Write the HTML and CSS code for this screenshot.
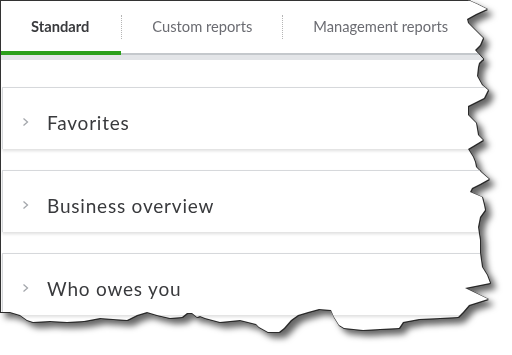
FILE: index.html
```html
<!DOCTYPE html>
<html lang="en">
<head>
<meta charset="UTF-8">
<title>Reports</title>
<link rel="stylesheet" href="styles.css">
</head>
<body>
<div class="sheet">
  <div class="page">

    <!-- tabs -->
    <nav class="tabs">
      <a class="tab active">Standard</a>
      <span class="sep"></span>
      <a class="tab">Custom reports</a>
      <span class="sep"></span>
      <a class="tab">Management reports</a>
    </nav>

    <!-- report groups -->
    <div class="groups">
      <div class="group">
        <svg class="chev" width="7" height="10" viewBox="0 0 7 10"><polyline points="1.5,1.5 5.5,5 1.5,8.5"/></svg>
        <span class="title">Favorites</span>
      </div>
      <div class="group">
        <svg class="chev" width="7" height="10" viewBox="0 0 7 10"><polyline points="1.5,1.5 5.5,5 1.5,8.5"/></svg>
        <span class="title">Business overview</span>
      </div>
      <div class="group">
        <svg class="chev" width="7" height="10" viewBox="0 0 7 10"><polyline points="1.5,1.5 5.5,5 1.5,8.5"/></svg>
        <span class="title">Who owes you</span>
      </div>
    </div>

  </div>
</div>
</body>
</html>
```

FILE: styles.css
```css
body{margin:0;background:#fff;font-family:Lato, "Open Sans", sans-serif;}

/* torn paper look: outline + soft shadow on the clipped page */
.sheet{
  width:512px;height:355px;
  filter:drop-shadow(1px 0 0 #2a2a2a) drop-shadow(0 1px 0 #2a2a2a) drop-shadow(5px 5px 3px rgba(0,0,0,.6));
}
.page{
  height:355px;box-sizing:border-box;background:#fff;
  border-top:1px solid #333;border-left:1px solid #333;
  clip-path:polygon(0 0,468px 0,477px 4px,487px 9px,476px 14px,467px 19px,468px 23px,475px 30px,483px 38px,480px 45px,475px 50px,483px 59px,479px 63px,478px 67px,477px 76px,482px 85px,488px 90px,484px 98px,476px 102px,468px 106px,468px 115px,476px 123px,477px 129px,478px 135px,483px 140px,468px 149px,473px 157px,475px 162px,476px 167px,482px 173px,489px 179px,480px 184px,472px 188px,470px 192px,482px 197px,484px 205px,485px 210px,480px 217px,478px 227px,479px 234px,480px 240px,480px 253px,481px 260px,482px 267px,487px 275px,490px 283px,465px 288px,488px 299px,469px 305px,463px 312px,458px 317px,440px 318px,419px 319px,403px 322px,399px 328px,380px 329px,363px 330px,344px 328px,339px 325px,334px 317px,331px 310px,319px 309px,308px 312px,298px 315px,291px 320px,284px 328px,279px 332px,268px 332px,259px 327px,256px 324px,240px 320px,220px 322px,205px 318px,200px 316px,197px 317px,192px 313px,187px 313px,182px 317px,170px 318px,157px 315px,147px 312px,137px 315px,127px 320px,113px 319px,100px 318px,84px 321px,67px 322px,50px 321px,33px 322px,27px 320px,20px 315px,10px 312px,0 312px);
}

.tabs{
  display:flex;align-items:center;height:52px;
  border-bottom:2px solid #c4c8cc;box-shadow:0 5px 0 #e3e5e8;
}
.tab{
  align-self:stretch;display:flex;align-items:center;
  padding:0 30px 3px;font-size:14.7px;color:#6b6c72;
}
.tab.active{
  color:#393a3d;font-weight:bold;padding-right:32px;
  padding-bottom:1px;border-bottom:4px solid #2ca01c;margin-bottom:-2px;
}
.sep{width:0;height:24px;border-left:1px dotted #b5b5b5;}

.groups{padding:32px 0 0 1px;}
.group{
  display:flex;align-items:center;height:62px;box-sizing:border-box;
  padding:7px 0 0 19px;margin-bottom:21px;
  border-top:1px solid #d6d8db;border-left:1px solid #d6d8db;
  box-shadow:0 2px 3px rgba(0,0,0,.13);
}
.chev{fill:none;stroke:#a4a7ac;stroke-width:1.3;}
.title{margin-left:18px;font-size:19px;letter-spacing:.8px;color:#393a3d;}
```
